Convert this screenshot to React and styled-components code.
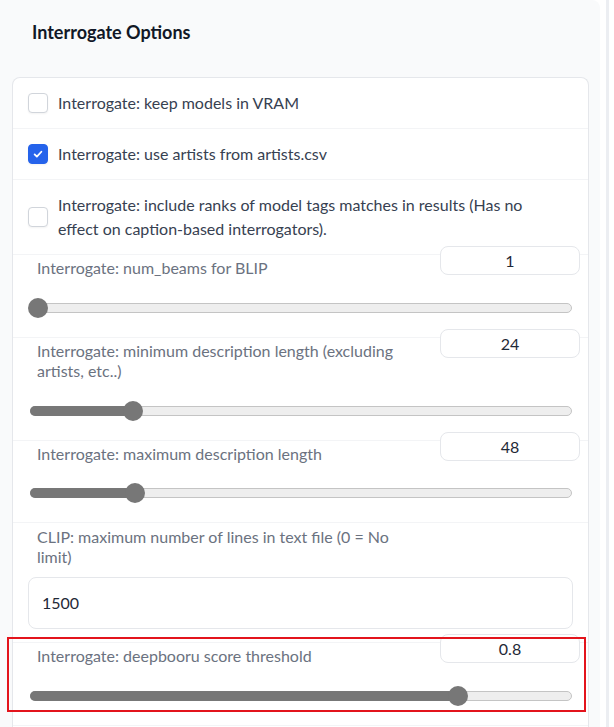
import React from 'react';
import styled, { createGlobalStyle } from 'styled-components';

const GlobalStyle = createGlobalStyle`
  body {
    margin: 0;
    background: #ffffff;
    font-family: Lato, "Noto Sans", sans-serif;
    font-size: 16px;
  }
`;

const Frame = styled.div`
  width: 606px;
  min-height: 727px;
  border-right: 3px solid #eceef2;
`;

const Panel = styled.div`
  width: 600px;
  min-height: 727px;
  box-sizing: border-box;
  padding: 19px 11px 0 12px;
  background: #f9fafb;
  border-top-right-radius: 8px;
`;

const Title = styled.h2`
  margin: 0 0 32px 20px;
  font-size: 18px;
  line-height: 26px;
  font-weight: 700;
  color: #111827;
`;

const Card = styled.div`
  background: #ffffff;
  border: 1px solid #e5e7eb;
  border-bottom: none;
  border-radius: 8px 8px 0 0;
`;

const Row = styled.div`
  position: relative;
  & + & {
    border-top: 1px solid #f3f4f6;
  }
`;

const CheckRow = styled(Row)`
  display: flex;
  align-items: center;
  gap: 10px;
  padding: 13px 16px 13px 15px;
  line-height: 24px;
  color: #374151;
`;

const CheckText = styled.span`
  max-width: 480px;
`;

const Box = styled.span`
  flex: none;
  width: 20px;
  height: 20px;
  box-sizing: border-box;
  border-radius: 4px;
  border: 1px solid ${(p) => (p.checked ? '#2563eb' : '#d1d5db')};
  background: ${(p) => (p.checked ? '#2563eb' : '#ffffff')};
  box-shadow: 0 1px 2px rgba(0, 0, 0, 0.05);
  display: flex;
  align-items: center;
  justify-content: center;
`;

const SliderRow = styled(Row)`
  padding: 0 16px 19px 17px;
`;

const Header = styled.div`
  display: flex;
  justify-content: space-between;
  align-items: flex-start;
`;

const Label = styled.span`
  display: block;
  max-width: 365px;
  padding: ${(p) => (p.top ? `${p.top}px` : '3px')} 0 0 ${(p) => p.indent || 7}px;
  line-height: ${(p) => p.lh || 20.5}px;
  color: #6b7280;
`;

const NumberBox = styled.div`
  width: 140px;
  height: 29px;
  box-sizing: border-box;
  margin: -9px -8px 0 0;
  border: 1px solid #e5e7eb;
  border-radius: 8px;
  background: #ffffff;
  color: #1f2937;
  line-height: 27px;
  text-align: center;
`;

const Track = styled.div`
  position: relative;
  height: 20px;
  margin-top: 19px;
`;

const Rail = styled.div`
  position: absolute;
  left: 0;
  right: 0;
  top: 5px;
  height: 10px;
  box-sizing: border-box;
  border: 1px solid #c4c4c4;
  border-radius: 5px;
  background: #eeeeee;
`;

const Fill = styled.div`
  position: absolute;
  left: 0;
  top: 5px;
  height: 10px;
  border-radius: 5px;
  background: #777777;
`;

const Thumb = styled.div`
  position: absolute;
  top: 0;
  width: 20px;
  height: 20px;
  border-radius: 50%;
  background: #777777;
`;

const TextRow = styled(Row)`
  padding: 0 15px 13px 15px;
`;

const TextBox = styled.div`
  height: 52px;
  margin-top: 10px;
  box-sizing: border-box;
  padding: 0 13px;
  border: 1px solid #e5e7eb;
  border-radius: 8px;
  background: #ffffff;
  color: #1f2937;
  line-height: 50px;
`;

const Highlight = styled.div`
  position: absolute;
  top: -6px;
  left: -6px;
  right: 2px;
  bottom: 13px;
  border: 2px solid #e3141c;
  z-index: 2;
  pointer-events: none;
`;

const Rest = styled(Row)`
  height: 30px;
`;

const Check = ({ checked }) => (
  <Box checked={checked}>
    {checked && (
      <svg width="12" height="12" viewBox="0 0 16 16">
        <path d="M3.5 8.5l3 3 6-6.5" fill="none" stroke="#fff" strokeWidth="2.4" strokeLinecap="round" strokeLinejoin="round" />
      </svg>
    )}
  </Box>
);

const Slider = ({ value, min, max }) => {
  const f = (value - min) / (max - min);
  const center = 8 + f * 525;
  return (
    <Track>
      <Rail />
      <Fill style={{ width: center }} />
      <Thumb style={{ left: center - 10 }} />
    </Track>
  );
};

const checks = [
  { label: 'Interrogate: keep models in VRAM', checked: false },
  { label: 'Interrogate: use artists from artists.csv', checked: true },
  {
    label: 'Interrogate: include ranks of model tags matches in results (Has no effect on caption-based interrogators).',
    checked: false,
  },
];

const sliders = [
  { label: 'Interrogate: num_beams for BLIP', value: 1, min: 1, max: 16 },
  { label: 'Interrogate: minimum description length (excluding artists, etc..)', value: 24, min: 1, max: 128 },
  { label: 'Interrogate: maximum description length', value: 48, min: 1, max: 256 },
];

export default function App() {
  return (
    <>
      <GlobalStyle />
      <Frame>
        <Panel>
          <Title>Interrogate Options</Title>
          <Card>
            {checks.map((c) => (
              <CheckRow key={c.label}>
                <Check checked={c.checked} />
                <CheckText>{c.label}</CheckText>
              </CheckRow>
            ))}
            {sliders.map((s) => (
              <SliderRow key={s.label}>
                <Header>
                  <Label>{s.label}</Label>
                  <NumberBox>{s.value}</NumberBox>
                </Header>
                <Slider value={s.value} min={s.min} max={s.max} />
              </SliderRow>
            ))}
            <TextRow>
              <Label top={4} indent={9} lh={20}>
                CLIP: maximum number of lines in text file (0 = No limit)
              </Label>
              <TextBox>1500</TextBox>
            </TextRow>
            <SliderRow>
              <Header>
                <Label>Interrogate: deepbooru score threshold</Label>
                <NumberBox>0.8</NumberBox>
              </Header>
              <Slider value={0.8} min={0} max={1} />
              <Highlight />
            </SliderRow>
            <Rest />
          </Card>
        </Panel>
      </Frame>
    </>
  );
}
